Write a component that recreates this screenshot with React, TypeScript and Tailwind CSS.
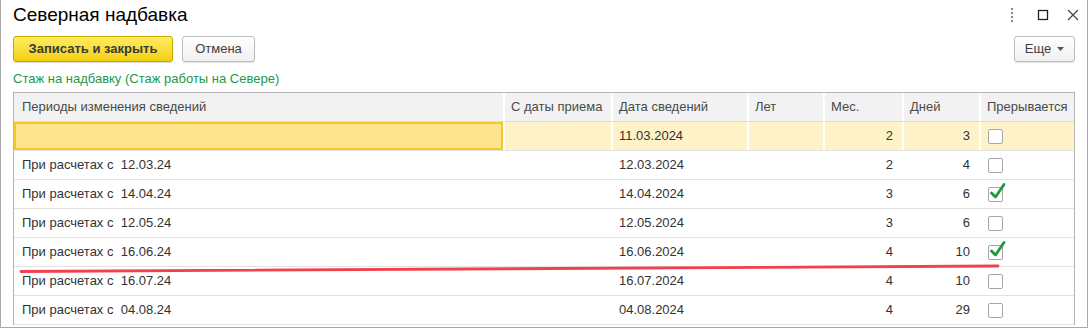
import React from "react";

type Row = {
  period: string;
  date: string;
  m: string;
  d: string;
  checked: boolean;
  selected?: boolean;
};

const rows: Row[] = [
  { period: "", date: "11.03.2024", m: "2", d: "3", checked: false, selected: true },
  { period: "При расчетах с  12.03.24", date: "12.03.2024", m: "2", d: "4", checked: false },
  { period: "При расчетах с  14.04.24", date: "14.04.2024", m: "3", d: "6", checked: true },
  { period: "При расчетах с  12.05.24", date: "12.05.2024", m: "3", d: "6", checked: false },
  { period: "При расчетах с  16.06.24", date: "16.06.2024", m: "4", d: "10", checked: true },
  { period: "При расчетах с  16.07.24", date: "16.07.2024", m: "4", d: "10", checked: false },
  { period: "При расчетах с  04.08.24", date: "04.08.2024", m: "4", d: "29", checked: false },
];

const cols = "grid grid-cols-[489px_108px_136px_76px_79px_77px_95px]";

function Checkbox({ checked }: { checked: boolean }) {
  return (
    <div className="relative w-[15px] h-[15px] rounded-[2px] border border-[#a6a6a6] bg-white">
      {checked && (
        <svg className="absolute left-[0px] top-[-6px]" width="17" height="18" viewBox="0 0 17 18">
          <path d="M2.5 11 L6.5 15 L15 2.5" fill="none" stroke="#1e9a3c" strokeWidth="2.8" strokeLinecap="round" strokeLinejoin="round" />
        </svg>
      )}
    </div>
  );
}

export default function App() {
  return (
    <div
      className="relative w-[1088px] h-[328px] overflow-hidden bg-white border-l border-r border-b border-[#a9a9a9] text-[#333]"
      style={{ fontFamily: '"Liberation Sans", Arial, sans-serif' }}
    >
      {/* Title bar */}
      <div className="flex items-center h-[30px] pl-[12px] pr-[6px]">
        <div className="text-[19px] text-black leading-none mt-[-2px]">Северная надбавка</div>
        <div className="ml-auto flex items-center">
          <svg width="6" height="16" viewBox="0 0 6 16" className="mr-[22px]">
            <circle cx="3" cy="2" r="1.2" fill="#888" />
            <circle cx="3" cy="6" r="1.2" fill="#888" />
            <circle cx="3" cy="10" r="1.2" fill="#888" />
            <circle cx="3" cy="14" r="1.2" fill="#888" />
          </svg>
          <svg width="12" height="12" viewBox="0 0 12 12" className="mr-[18px]">
            <rect x="1.5" y="1.5" width="9" height="9" fill="none" stroke="#222" strokeWidth="1.3" />
          </svg>
          <svg width="12" height="12" viewBox="0 0 12 12" className="mr-[2px]">
            <path d="M1 1 L11 11 M11 1 L1 11" stroke="#444" strokeWidth="1.2" />
          </svg>
        </div>
      </div>

      {/* Toolbar */}
      <div className="flex items-center h-[26px] mt-[6px] pl-[12px] pr-[12px]">
        <button className="h-[26px] w-[160px] rounded-[3px] border border-[#c9a800] bg-gradient-to-b from-[#ffec5c] to-[#f4cf00] text-[13px] font-bold text-[#3a3a3a] shadow-[0_1px_1px_rgba(0,0,0,0.15)]">
          Записать и закрыть
        </button>
        <button className="ml-[9px] h-[26px] w-[73px] rounded-[3px] border border-[#bdbdbd] bg-gradient-to-b from-white to-[#f0f0f0] text-[13px] text-[#404040] shadow-[0_1px_1px_rgba(0,0,0,0.12)]">
          Отмена
        </button>
        <button className="ml-auto h-[26px] w-[61px] rounded-[3px] border border-[#bdbdbd] bg-gradient-to-b from-white to-[#f0f0f0] text-[13px] text-[#404040] shadow-[0_1px_1px_rgba(0,0,0,0.12)] flex items-center justify-center gap-[6px]">
          <span>Еще</span>
          <svg width="7" height="4" viewBox="0 0 7 4">
            <path d="M0 0 L7 0 L3.5 4 Z" fill="#555" />
          </svg>
        </button>
      </div>

      {/* Label */}
      <div className="pl-[12px] mt-[9px] text-[13px] leading-[16px] text-[#22994a]">
        Стаж на надбавку (Стаж работы на Севере)
      </div>

      {/* Table */}
      <div className="ml-[12px] mt-[5px] w-[1062px] border border-[#b5b5b5] border-b-0">
        <div className={`${cols} h-[29px] bg-[#f2f2f2] border-b border-[#dcdcdc] text-[13px] text-[#4a4a4a]`}>
          {["Периоды изменения сведений", "С даты приема", "Дата сведений", "Лет", "Мес.", "Дней", "Прерывается"].map((h, i) => (
            <div key={h} className={`flex items-center ${i > 0 ? "border-l-2 border-white pl-[6px]" : "pl-[8px]"}`}>
              {h}
            </div>
          ))}
        </div>
        {rows.map((r, idx) => (
          <div
            key={idx}
            className={`${cols} h-[29px] border-b border-[#e3e3e3] text-[13px] text-[#333] ${r.selected ? "bg-[#fdf2c8]" : "bg-white"}`}
          >
            <div
              className={`flex items-center pl-[8px] whitespace-pre ${r.selected ? "bg-[#fde590] border-2 border-[#f7c824]" : ""}`}
            >
              {r.period}
            </div>
            <div className={`${r.selected ? "border-l-2 border-white" : "border-l-2 border-transparent"}`}></div>
            <div className={`flex items-center pl-[6px] ${r.selected ? "border-l-2 border-white" : "border-l-2 border-transparent"}`}>{r.date}</div>
            <div className={`${r.selected ? "border-l-2 border-white" : ""}`}></div>
            <div className={`flex items-center justify-end pr-[9px] ${r.selected ? "border-l-2 border-white" : ""}`}>{r.m}</div>
            <div className={`flex items-center justify-end pr-[9px] ${r.selected ? "border-l-2 border-white" : ""}`}>{r.d}</div>
            <div className={`flex items-center pl-[7px] ${r.selected ? "border-l-2 border-white" : "border-l-2 border-transparent"}`}>
              <Checkbox checked={r.checked} />
            </div>
          </div>
        ))}
      </div>

      {/* Red annotation line */}
      <svg className="absolute left-0 top-0 pointer-events-none" width="1088" height="328">
        <path d="M20 271.5 L997 266" stroke="#f2404c" strokeWidth="2.8" strokeLinecap="round" fill="none" />
      </svg>
    </div>
  );
}
